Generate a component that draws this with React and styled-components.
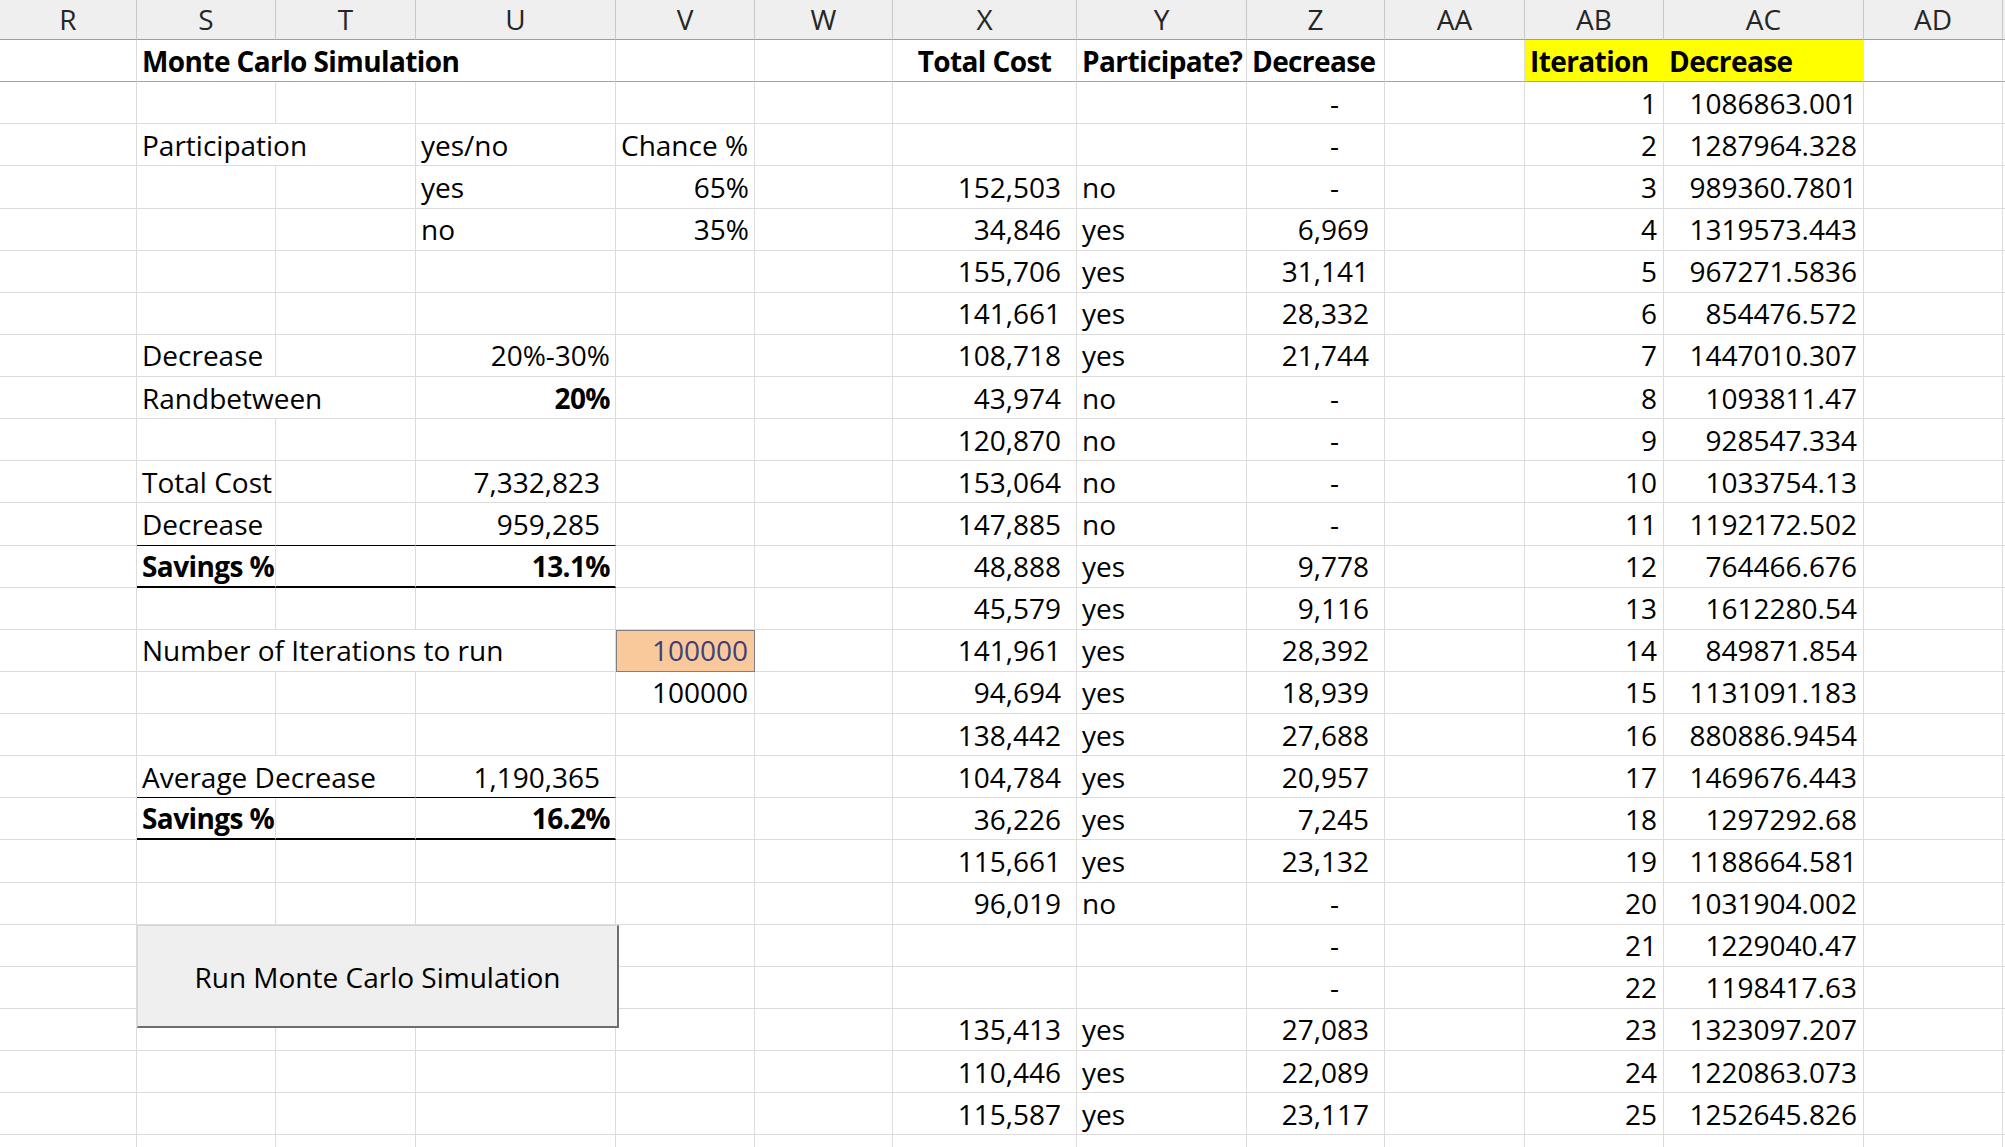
import React from "react";
import styled, { createGlobalStyle, css } from "styled-components";

/* ================= SHEET SETUP ================= */

const COLS = ["R", "S", "T", "U", "V", "W", "X", "Y", "Z", "AA", "AB", "AC", "AD", "AE"];
const WIDTHS = [137, 139, 140, 200, 139, 138, 184, 170, 138, 140, 139, 200, 139, 80];
const ROW_H = 42.14;
const LINE_COLS = ["S", "T", "U"];
const FONT = `"Open Sans", Lato, sans-serif`;

const GlobalStyle = createGlobalStyle`
  html, body {
    margin: 0;
    padding: 0;
    background: #ffffff;
    overflow: hidden;
  }
  #root {
    width: 2005px;
    height: 1147px;
    overflow: hidden;
  }
`;

const Sheet = styled.div`
  position: relative;
  display: grid;
  grid-template-columns: ${WIDTHS.map((w) => `${w}px`).join(" ")};
  grid-template-rows: 40px repeat(27, ${ROW_H}px);
  width: max-content;
  font-family: ${FONT};
  font-size: 28px;
  color: #000;
`;

const ColHead = styled.div`
  display: flex;
  align-items: center;
  justify-content: center;
  box-sizing: border-box;
  padding-bottom: 1px;
  background: #efefef;
  color: #262626;
  border-right: 1px solid #c8c8c8;
  border-bottom: 1px solid #9e9e9e;
`;

const Cell = styled.div`
  grid-column: span ${(p) => p.$span};
  box-sizing: border-box;
  display: flex;
  align-items: center;
  justify-content: ${(p) =>
    p.$align === "r" ? "flex-end" : p.$align === "c" ? "center" : "flex-start"};
  padding: 0 ${(p) => p.$padR}px 0 5px;
  white-space: nowrap;
  overflow: visible;
  font-weight: ${(p) => (p.$bold ? 700 : 400)};
  letter-spacing: ${(p) => (p.$bold ? "-0.6px" : "0")};
  background: ${(p) => p.$fill || "transparent"};
  color: ${(p) => p.$ink || "#000"};
  border-right: 1px solid ${(p) => p.$fill || "#dcdcdc"};
  border-bottom: ${(p) =>
    p.$line === "thick"
      ? "2px solid #000"
      : p.$line === "thin"
      ? "1px solid #000"
      : p.$frozen
      ? "1px solid #a3a3a3"
      : "1px solid #dcdcdc"};

  ${(p) =>
    p.$input &&
    css`
      outline: 1px solid #7f7f7f;
      outline-offset: -1px;
    `}
`;

const RunButton = styled.button`
  position: absolute;
  left: 137px;
  top: ${40 + 21 * ROW_H}px;
  width: 482px;
  height: 103px;
  box-sizing: border-box;
  background: #efefef;
  border-top: 1px solid #d6d6d6;
  border-left: 1px solid #d6d6d6;
  border-right: 2px solid #6e6e6e;
  border-bottom: 2px solid #6e6e6e;
  font-family: ${FONT};
  font-size: 28px;
  color: #000;
  padding: 2px 0 0;
  cursor: pointer;
`;

/* ================= CELL HELPERS ================= */

const txt = (t, extra = {}) => ({ t, align: "l", pad: 5, ...extra });
const num = (t) => ({ t, align: "r", pad: 6 });
const acct = (t) => ({ t, align: "r", pad: 15 });
const pct = (t, bold) => ({ t, align: "r", pad: 5, bold });
const dash = { t: "-", align: "r", pad: 45 };

const sim = (x, y, z, it, dec) => ({
  ...(x ? { X: acct(x), Y: txt(y) } : {}),
  Z: z === "-" ? dash : acct(z),
  AB: num(it),
  AC: num(dec),
});

/* ================= DATA ================= */

const ROWS = [
  {
    frozen: true,
    cells: {
      S: txt("Monte Carlo Simulation", { bold: true, span: 3 }),
      X: { t: "Total Cost", align: "c", pad: 5, bold: true },
      Y: txt("Participate?", { bold: true }),
      Z: txt("Decrease", { bold: true }),
      AB: txt("Iteration", { bold: true, fill: "#ffff00" }),
      AC: txt("Decrease", { bold: true, fill: "#ffff00" }),
    },
  },
  { cells: sim(null, null, "-", "1", "1086863.001") },
  {
    cells: {
      S: txt("Participation", { span: 2 }),
      U: txt("yes/no"),
      V: txt("Chance %"),
      ...sim(null, null, "-", "2", "1287964.328"),
    },
  },
  { cells: { U: txt("yes"), V: pct("65%"), ...sim("152,503", "no", "-", "3", "989360.7801") } },
  { cells: { U: txt("no"), V: pct("35%"), ...sim("34,846", "yes", "6,969", "4", "1319573.443") } },
  { cells: sim("155,706", "yes", "31,141", "5", "967271.5836") },
  { cells: sim("141,661", "yes", "28,332", "6", "854476.572") },
  {
    cells: {
      S: txt("Decrease"),
      U: pct("20%-30%"),
      ...sim("108,718", "yes", "21,744", "7", "1447010.307"),
    },
  },
  {
    cells: {
      S: txt("Randbetween", { span: 2 }),
      U: pct("20%", true),
      ...sim("43,974", "no", "-", "8", "1093811.47"),
    },
  },
  { cells: sim("120,870", "no", "-", "9", "928547.334") },
  {
    cells: {
      S: txt("Total Cost"),
      U: acct("7,332,823"),
      ...sim("153,064", "no", "-", "10", "1033754.13"),
    },
  },
  {
    line: "thin",
    cells: {
      S: txt("Decrease"),
      U: acct("959,285"),
      ...sim("147,885", "no", "-", "11", "1192172.502"),
    },
  },
  {
    line: "thick",
    cells: {
      S: txt("Savings %", { bold: true }),
      U: pct("13.1%", true),
      ...sim("48,888", "yes", "9,778", "12", "764466.676"),
    },
  },
  { cells: sim("45,579", "yes", "9,116", "13", "1612280.54") },
  {
    cells: {
      S: txt("Number of Iterations to run", { span: 3 }),
      V: { ...num("100000"), fill: "#f9c99c", ink: "#3f3f76", input: true },
      ...sim("141,961", "yes", "28,392", "14", "849871.854"),
    },
  },
  { cells: { V: num("100000"), ...sim("94,694", "yes", "18,939", "15", "1131091.183") } },
  { cells: sim("138,442", "yes", "27,688", "16", "880886.9454") },
  {
    line: "thin",
    cells: {
      S: txt("Average Decrease", { span: 2 }),
      U: acct("1,190,365"),
      ...sim("104,784", "yes", "20,957", "17", "1469676.443"),
    },
  },
  {
    line: "thick",
    cells: {
      S: txt("Savings %", { bold: true }),
      U: pct("16.2%", true),
      ...sim("36,226", "yes", "7,245", "18", "1297292.68"),
    },
  },
  { cells: sim("115,661", "yes", "23,132", "19", "1188664.581") },
  { cells: sim("96,019", "no", "-", "20", "1031904.002") },
  { cells: sim(null, null, "-", "21", "1229040.47") },
  { cells: sim(null, null, "-", "22", "1198417.63") },
  { cells: sim("135,413", "yes", "27,083", "23", "1323097.207") },
  { cells: sim("110,446", "yes", "22,089", "24", "1220863.073") },
  { cells: sim("115,587", "yes", "23,117", "25", "1252645.826") },
  { cells: {} },
];

/* ================= COMPONENT ================= */

const renderRow = (row, r) => {
  const out = [];
  let i = 0;
  while (i < COLS.length) {
    const col = COLS[i];
    const c = row.cells[col];
    const span = (c && c.span) || 1;
    out.push(
      <Cell
        key={`${r}-${col}`}
        $span={span}
        $align={c ? c.align : "l"}
        $padR={c ? c.pad : 5}
        $bold={c && c.bold}
        $fill={c && c.fill}
        $ink={c && c.ink}
        $input={c && c.input}
        $frozen={row.frozen}
        $line={row.line && LINE_COLS.includes(col) ? row.line : null}
      >
        {c ? c.t : null}
      </Cell>
    );
    i += span;
  }
  return out;
};

const App = () => {
  return (
    <>
      <GlobalStyle />
      <Sheet>
        {COLS.map((col) => (
          <ColHead key={col}>{col === "AE" ? "" : col}</ColHead>
        ))}
        {ROWS.map((row, r) => renderRow(row, r))}
        <RunButton type="button">Run Monte Carlo Simulation</RunButton>
      </Sheet>
    </>
  );
};

export default App;
